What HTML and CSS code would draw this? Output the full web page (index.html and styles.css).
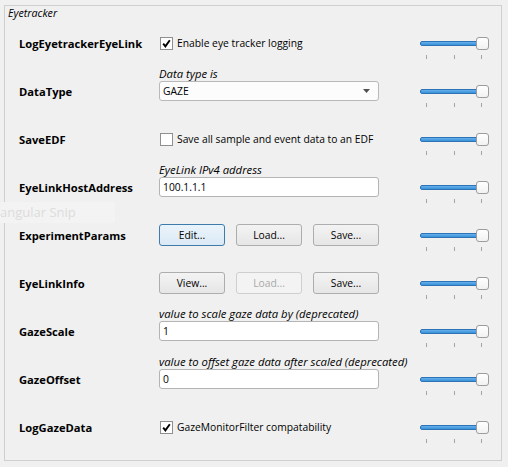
FILE: index.html
```html
<!DOCTYPE html>
<html>
<head>
<meta charset="utf-8">
<link rel="stylesheet" href="styles.css">
</head>
<body>
<div class="group">
  <div class="group-title">Eyetracker</div>
  <div class="rows">
    <div class="row">
      <div class="label">LogEyetrackerEyeLink</div>
      <div class="widget">
        <div class="check"><span class="box"><svg viewBox="0 0 11 11" width="11" height="11"><path d="M2.2 5.6 L4.4 8.4 L8.8 2.2" fill="none" stroke="#000" stroke-width="1.9"/></svg></span><span>Enable eye tracker logging</span></div>
      </div>
      <div class="slider"><div class="track"><div class="groove"></div><div class="handle"></div></div><div class="ticks"><i></i><i></i><i></i></div></div>
    </div>
    <div class="row">
      <div class="label">DataType</div>
      <div class="widget stack">
        <div class="caption">Data type is</div>
        <div class="combo"><span>GAZE</span><svg viewBox="0 0 7 4" width="7" height="4"><path d="M0 0 H7 L3.5 4 Z" fill="#505050"/></svg></div>
      </div>
      <div class="slider"><div class="track"><div class="groove"></div><div class="handle"></div></div><div class="ticks"><i></i><i></i><i></i></div></div>
    </div>
    <div class="row">
      <div class="label">SaveEDF</div>
      <div class="widget">
        <div class="check"><span class="box"></span><span>Save all sample and event data to an EDF</span></div>
      </div>
      <div class="slider"><div class="track"><div class="groove"></div><div class="handle"></div></div><div class="ticks"><i></i><i></i><i></i></div></div>
    </div>
    <div class="row">
      <div class="label">EyeLinkHostAddress</div>
      <div class="widget stack">
        <div class="caption">EyeLink IPv4 address</div>
        <div class="field">100.1.1.1</div>
      </div>
      <div class="slider"><div class="track"><div class="groove"></div><div class="handle"></div></div><div class="ticks"><i></i><i></i><i></i></div></div>
    </div>
    <div class="row">
      <div class="label">ExperimentParams</div>
      <div class="widget buttons">
        <div class="btn focus">Edit...</div>
        <div class="btn">Load...</div>
        <div class="btn">Save...</div>
      </div>
      <div class="slider"><div class="track"><div class="groove"></div><div class="handle"></div></div><div class="ticks"><i></i><i></i><i></i></div></div>
    </div>
    <div class="row">
      <div class="label">EyeLinkInfo</div>
      <div class="widget buttons">
        <div class="btn">View...</div>
        <div class="btn disabled">Load...</div>
        <div class="btn">Save...</div>
      </div>
      <div class="slider"><div class="track"><div class="groove"></div><div class="handle"></div></div><div class="ticks"><i></i><i></i><i></i></div></div>
    </div>
    <div class="row">
      <div class="label">GazeScale</div>
      <div class="widget stack">
        <div class="caption">value to scale gaze data by (deprecated)</div>
        <div class="field">1</div>
      </div>
      <div class="slider"><div class="track"><div class="groove"></div><div class="handle"></div></div><div class="ticks"><i></i><i></i><i></i></div></div>
    </div>
    <div class="row">
      <div class="label">GazeOffset</div>
      <div class="widget stack">
        <div class="caption">value to offset gaze data after scaled (deprecated)</div>
        <div class="field">0</div>
      </div>
      <div class="slider"><div class="track"><div class="groove"></div><div class="handle"></div></div><div class="ticks"><i></i><i></i><i></i></div></div>
    </div>
    <div class="row">
      <div class="label">LogGazeData</div>
      <div class="widget">
        <div class="check"><span class="box"><svg viewBox="0 0 11 11" width="11" height="11"><path d="M2.2 5.6 L4.4 8.4 L8.8 2.2" fill="none" stroke="#000" stroke-width="1.9"/></svg></span><span>GazeMonitorFilter compatability</span></div>
      </div>
      <div class="slider"><div class="track"><div class="groove"></div><div class="handle"></div></div><div class="ticks"><i></i><i></i><i></i></div></div>
    </div>
  </div>
</div>
<div class="snip"><span>angular Snip</span></div>
</body>
</html>
```

FILE: styles.css
```css
html, body {
  margin: 0;
  padding: 0;
  background: #f0f0f0;
}
body {
  width: 508px;
  height: 467px;
  position: relative;
  overflow: hidden;
  font-family: "Open Sans", "Noto Sans", sans-serif;
  font-size: 10.3px;
  color: #000;
}
.group {
  box-sizing: border-box;
  margin: 5px 0 0 4px;
  width: 498px;
  height: 456px;
  border: 1px solid #cfcfcf;
}
.group-title {
  font-style: italic;
  font-size: 10.7px;
  height: 13px;
  line-height: 13px;
  padding: 1px 0 0 3px;
  box-sizing: border-box;
}
.rows {
  display: flex;
  flex-direction: column;
  padding-left: 14px;
}
.row {
  display: grid;
  grid-template-columns: 140px 220px 69px;
  height: 48px;
  align-items: center;
}
.label {
  font-weight: 700;
  font-size: 11.2px;
}
.widget.stack {
  display: flex;
  flex-direction: column;
  padding-bottom: 14px;
}
.caption {
  font-style: italic;
  font-size: 11.3px;
  height: 14px;
  line-height: 14px;
  white-space: nowrap;
}
.check {
  display: flex;
  align-items: center;
  padding-left: 1px;
  white-space: nowrap;
}
.box {
  box-sizing: border-box;
  width: 13px;
  height: 13px;
  border: 1px solid #8f8f8f;
  background: #fff;
  margin-right: 4px;
  display: flex;
  align-items: center;
  justify-content: center;
}
.combo, .field {
  box-sizing: border-box;
  height: 20px;
  border: 1px solid #b4b4b4;
  border-radius: 3px;
  background: #fff;
  padding: 0 0 0 3px;
  display: flex;
  align-items: center;
}
.combo {
  justify-content: space-between;
  padding-right: 8px;
  background: #fcfcfc;
  border-color: #b9b9b9;
}
.buttons {
  display: flex;
  gap: 11px;
  height: 22px;
}
.btn {
  box-sizing: border-box;
  width: 66px;
  height: 22px;
  border: 1px solid #adadad;
  border-radius: 3px;
  background: linear-gradient(#f3f3f3, #e6e6e6);
  display: flex;
  align-items: center;
  justify-content: center;
}
.btn.focus {
  border-color: #3d7bad;
  background: linear-gradient(#eaf3fb, #dbe9f5);
}
.btn.disabled {
  color: #a8a8a8;
  border-color: #cfcfcf;
  background: #f3f3f3;
}
.slider {
  align-self: start;
  margin-left: 41px;
  width: 69px;
  padding-top: 18px;
  display: flex;
  flex-direction: column;
}
.track {
  display: flex;
  align-items: center;
  height: 13px;
}
.groove {
  box-sizing: border-box;
  width: 58px;
  height: 5px;
  border: 1px solid #2d73b5;
  border-radius: 2px;
  background: linear-gradient(#64b2ee, #3a8fd6);
}
.handle {
  box-sizing: border-box;
  width: 13px;
  height: 13px;
  margin-left: -2px;
  border: 1px solid #9c9c9c;
  border-radius: 3px;
  background: linear-gradient(#ffffff, #f2f2f2);
}
.ticks {
  display: flex;
  justify-content: space-between;
  padding: 0 7px 0 6px;
  margin-top: 5px;
  height: 4px;
}
.ticks i {
  width: 1px;
  height: 4px;
  background: #a3a3a3;
}
.snip {
  position: absolute;
  left: 0;
  top: 202px;
  width: 115px;
  height: 21px;
  background: #f3f3f3;
  overflow: hidden;
  color: #dcdcdc;
  font-size: 13px;
  line-height: 21px;
  white-space: nowrap;
}
```
